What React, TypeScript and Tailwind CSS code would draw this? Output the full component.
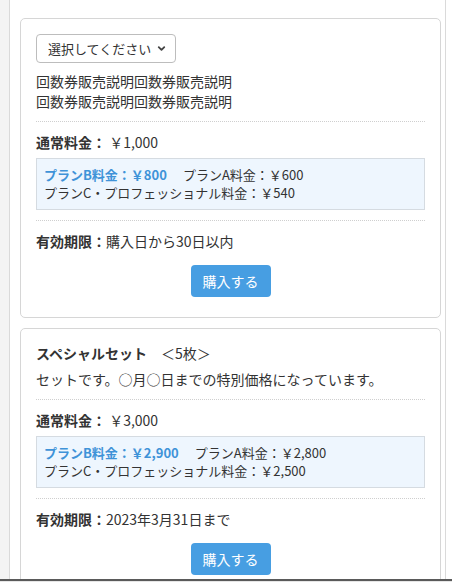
import { ChevronDown } from "lucide-react";

type Ticket = {
  title?: string;
  count?: string;
  description: string[];
  normalPrice: string;
  planB: string;
  planA: string;
  planC: string;
  expiry: string;
};

const tickets: Ticket[] = [
  {
    description: ["回数券販売説明回数券販売説明", "回数券販売説明回数券販売説明"],
    normalPrice: "￥1,000",
    planB: "￥800",
    planA: "￥600",
    planC: "￥540",
    expiry: "購入日から30日以内",
  },
  {
    title: "スペシャルセット",
    count: "＜5枚＞",
    description: ["セットです。○月○日までの特別価格になっています。"],
    normalPrice: "￥3,000",
    planB: "￥2,900",
    planA: "￥2,800",
    planC: "￥2,500",
    expiry: "2023年3月31日まで",
  },
];

function TicketCard({ ticket, withSelect }: { ticket: Ticket; withSelect?: boolean }) {
  return (
    <div className="mb-[10px] rounded-[5px] border border-[#d6d6d6] bg-white px-[15px] pt-[14px] pb-[20px]">
      {withSelect && (
        <div className="relative mt-[1px] mb-[8px] w-[140px]">
          <select className="h-[29px] w-full appearance-none rounded-[4px] border border-[#bdbdbd] bg-white pl-[11px] text-[13px] text-[#333]">
            <option>選択してください</option>
          </select>
          {/* arrow drawn over the select */}
          <ChevronDown
            className="pointer-events-none absolute top-[9px] right-[9px] h-[11px] w-[11px] text-[#444]"
            strokeWidth={4}
          />
        </div>
      )}
      {ticket.title && (
        <div className="mb-[6px] text-[14px] leading-[20px] text-[#333]">
          <span className="font-bold">{ticket.title}</span>
          <span className="ml-[14px]">{ticket.count}</span>
        </div>
      )}
      <div className="text-[14px] leading-[20px] text-[#333]">
        {ticket.description.map((line) => (
          <div key={line}>{line}</div>
        ))}
      </div>

      {/* Prices */}
      <div className="mt-[10px] border-t border-dotted border-[#cfcfcf] pt-[10px]">
        <div className="text-[14px] leading-[20px] text-[#333]">
          <span className="font-bold">通常料金：</span> {ticket.normalPrice}
        </div>
        <div className="mt-[6px] border border-[#d5dbe1] bg-[#eef6fe] px-[7px] py-[7px] text-[13px] leading-[18px] text-[#333]">
          <div>
            <span className="mr-[16px] font-bold text-[#3f93d8]">
              プランB料金：{ticket.planB}
            </span>
            プランA料金：{ticket.planA}
          </div>
          <div>プランC・プロフェッショナル料金：{ticket.planC}</div>
        </div>
      </div>

      {/* Expiry */}
      <div className="mt-[10px] border-t border-dotted border-[#cfcfcf] pt-[10px] text-[14px] leading-[20px] text-[#333]">
        <span className="font-bold">有効期限：</span>
        {ticket.expiry}
      </div>

      <div className="mt-[14px] flex justify-center">
        <button className="h-[32px] w-[80px] rounded-[4px] bg-[#479ee2] text-[14px] text-white">購入する</button>
      </div>
    </div>
  );
}

export default function App() {
  return (
    <div
      className="flex min-h-[582px] bg-white"
      style={{ fontFamily: '"Noto Sans CJK JP", "Noto Sans", sans-serif' }}
    >
      <div className="w-[9px] shrink-0 bg-[#f4f4f4]" />
      <div className="w-[437px] shrink-0 border-x border-[#dadada] bg-white pt-[18px] pr-[4px] pl-[10px]">
        {tickets.map((t, i) => (
          <TicketCard key={i} ticket={t} withSelect={i === 0} />
        ))}
      </div>
      <div className="fixed right-0 bottom-0 left-0 h-[3px] border-t-2 border-[#5a5a5a] bg-[#e6e6e6]" />
    </div>
  );
}
